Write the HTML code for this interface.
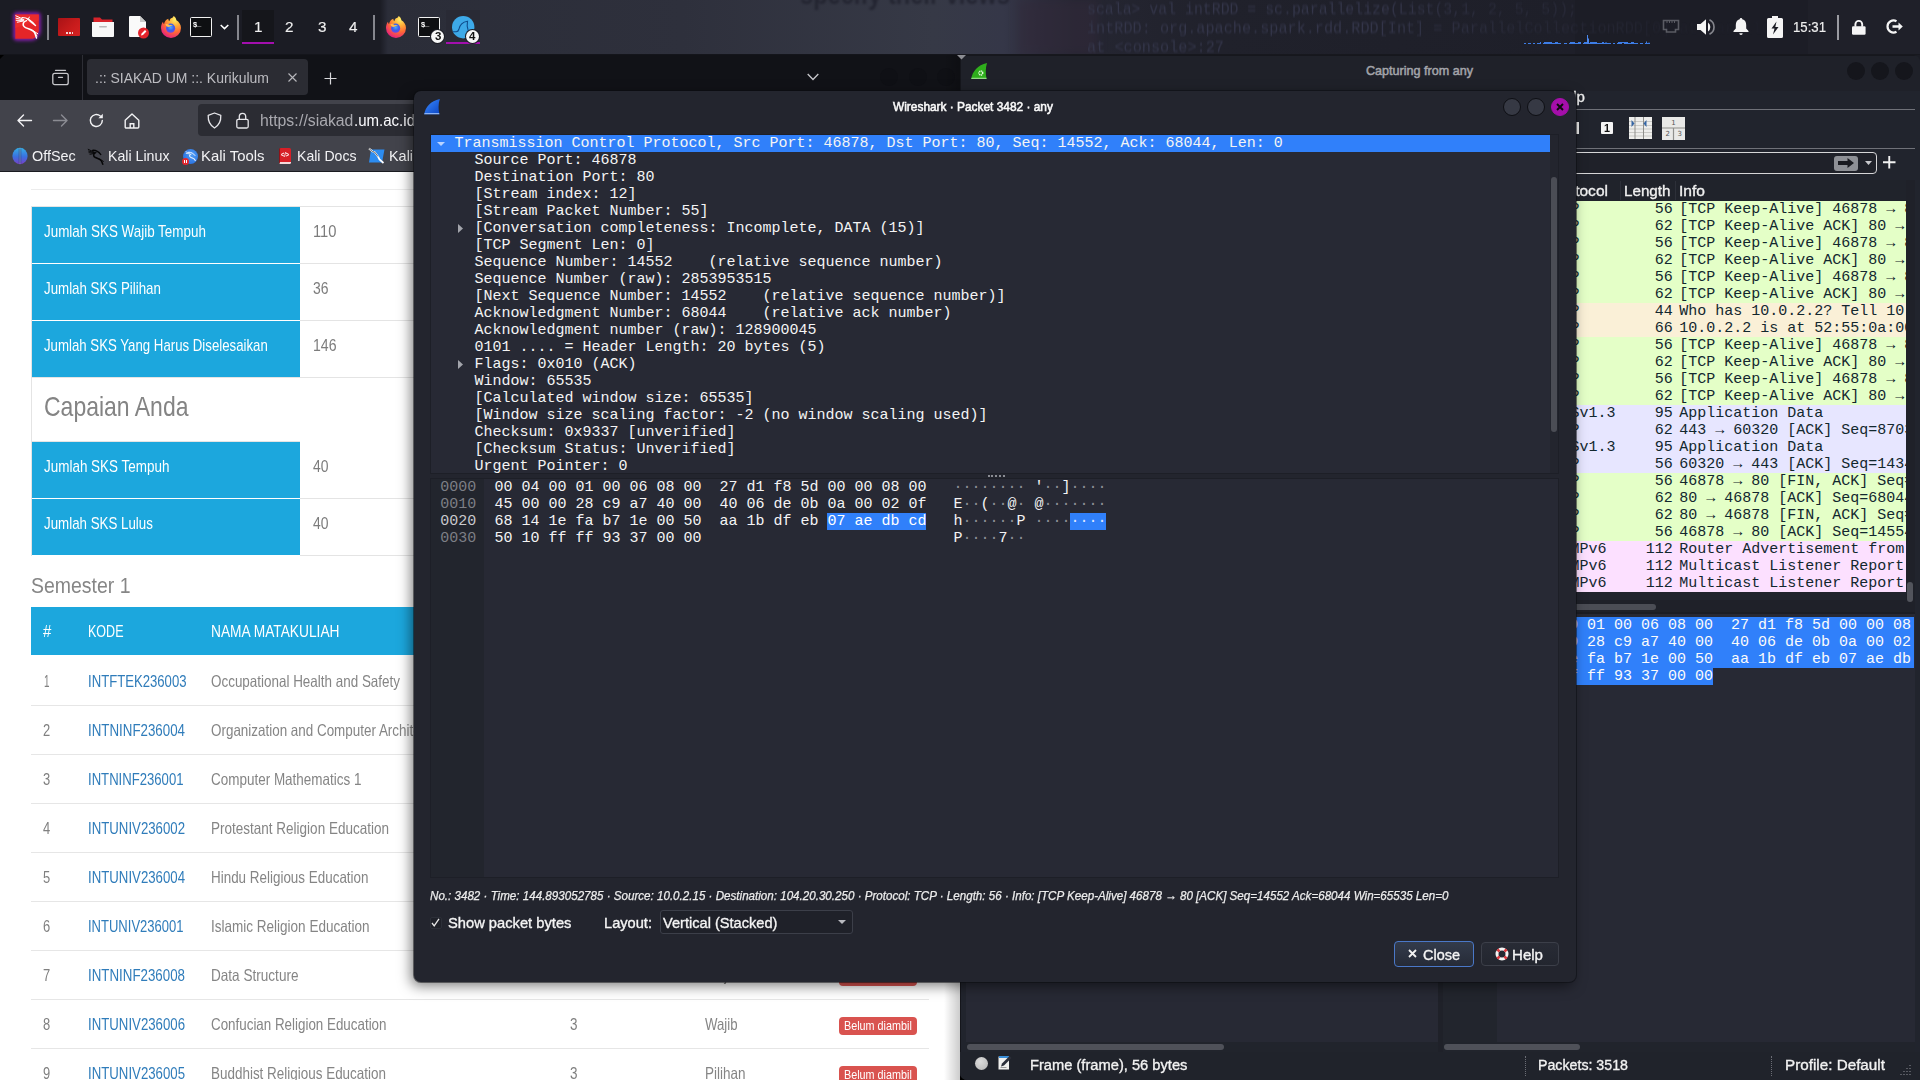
<!DOCTYPE html><html lang="en"><head><meta charset="utf-8"><title>Wireshark · Packet 3482 · any</title><style>
*{box-sizing:border-box;margin:0;padding:0}
html,body{width:1920px;height:1080px;overflow:hidden;background:#1b1c24}
#root{position:relative;width:1920px;height:1080px;overflow:hidden;background:#1b1c24;font-family:"Liberation Sans",sans-serif}
.b{position:absolute}
.t{position:absolute;white-space:pre;line-height:1;transform-origin:0 0;display:block}
.s{font-family:"Liberation Sans",sans-serif}
.m{font-family:"Liberation Mono",monospace}
.d{font-family:"DejaVu Sans",sans-serif}
.w{position:absolute;overflow:hidden}
svg{position:absolute;overflow:visible}
.ml{position:absolute;white-space:pre;font:15px/17px "Liberation Mono",monospace;height:17px}
</style></head><body><div id="root">
<div class="w" id="panel" style="left:0;top:0;width:1920px;height:55px;background:#1b1c24">
<div class="b" style="left:385px;top:0px;width:1190px;height:55px;background:linear-gradient(90deg,#2b2d38 0,#2e303c 25%,#363946 46%,#353748 52%,#2b2c3b 55%,#252632 58%,#20212b 70%,#1e1f29 100%);"></div>
<div class="b" style="left:380px;top:0px;width:8px;height:55px;background:linear-gradient(90deg,#1b1c24,#2b2d39);"></div>
<div class="b" style="left:1575px;top:0px;width:345px;height:55px;background:#1c1d26;"></div>
<div class="b" style="left:1808px;top:0px;width:112px;height:55px;background:#1f2029;"></div>
<div class="b" style="left:1018px;top:0;width:80px;height:55px;background:#33293a;opacity:.5;filter:blur(4px)"></div>
<span class="t s" style="left:800.00px;top:-21.40px;font-size:30px;color:#1d1e2a;font-weight:700;transform:scaleX(0.7871);filter:blur(1.2px);opacity:.7;">specify their views</span>
<span class="t m" style="left:1087.00px;top:0.98px;font-size:17px;color:#34364a;transform:scaleX(0.8733);filter:blur(.8px);-webkit-mask-image:linear-gradient(90deg,#000 0,#000 60%,rgba(0,0,0,.45) 85%);">scala&gt; val intRDD = sc.parallelize(List(3,1, 2, 5, 5));</span>
<span class="t m" style="left:1087.00px;top:19.98px;font-size:17px;color:#34364a;transform:scaleX(0.8934);filter:blur(.8px);-webkit-mask-image:linear-gradient(90deg,#000 0,#000 40%,rgba(0,0,0,.4) 60%,rgba(0,0,0,.3) 75%,rgba(0,0,0,.1) 82%,rgba(0,0,0,.05) 100%);">intRDD: org.apache.spark.rdd.RDD[Int] = ParallelCollectionRDD[0] at parallelize</span>
<span class="t m" style="left:1087.00px;top:38.98px;font-size:17px;color:#34364a;transform:scaleX(0.8953);filter:blur(.8px);">at &lt;console&gt;:27</span>
<div class="b" style="left:16px;top:15px;width:22px;height:23px;border-radius:2px 2px 9px 2px;background:#8a1fb0;box-shadow:0 0 3.500px 2.200px rgba(140,30,180,.85)"></div>
<svg style="left:15px;top:14px" width="24" height="25" viewBox="0 0 24 25"><path d="M.3.400h23.500v16.600C23 20.500 21 23.600 18 24.700H.3z" fill="#e52528"/><path d="M.3.400h23.500v6L.3 14z" fill="#ee2f2c" opacity=".7"/><g fill="none" stroke="#fff" stroke-linecap="round"><path d="M9 5.600L.8 1.800M8.500 6L1 4.200M8.300 6.400L1.200 6.300M8.500 7L2.300 8.200" stroke-width="1"/><path d="M7 3.500C12 3.300 16.500 6.500 20.600 11.600" stroke-width="1.200"/><path d="M12 4.800C15 6 18 8.500 20.600 11.600 17.500 10 15 8 12 4.800z" fill="#fff" stroke-width=".6"/><path d="M13.300 5.300l1-2.200M15.500 7l4 3.800" stroke-width="1"/><path d="M11.500 6.600C7.500 7.800 7 12 10.500 13.600 14.500 15.400 18.600 15.800 20 19.500L21.500 24" stroke-width="1.500"/><path d="M17 16l5.800 3.800M19 17.500l3 4.500" stroke-width="1"/></g></svg>
<div class="b" style="left:47px;top:15px;width:2px;height:25px;background:#85868d;"></div>
<div class="b" style="left:237px;top:15px;width:2px;height:25px;background:#85868d;"></div>
<div class="b" style="left:373px;top:15px;width:2px;height:25px;background:#85868d;"></div>
<div class="b" style="left:1837px;top:15px;width:2px;height:25px;background:#9a9ba1;"></div>
<div class="b" style="left:58px;top:18px;width:22px;height:18px;border-radius:1px;background:linear-gradient(135deg,#a91216,#c91c1c 60%,#d42222)"></div>
<div class="b" style="left:66px;top:32px;width:2px;height:2px;background:#f3d6d6;"></div><div class="b" style="left:69px;top:32px;width:2px;height:2px;background:#f3d6d6;"></div><div class="b" style="left:72px;top:32px;width:1px;height:2px;background:#f3d6d6;"></div>
<svg style="left:92px;top:16px" width="22" height="22" viewBox="0 0 22 22"><path d="M1.5 1.5h6.5l2 2h10.5v5h-19z" fill="#d8232a"/><path d="M0 6h22v14a1 1 0 0 1-1 1H1a1 1 0 0 1-1-1z" fill="#f7f7f7"/><rect x="7" y="10" width="8" height="1.6" rx=".8" fill="#b9b9b9"/></svg>
<svg style="left:129px;top:16px" width="20" height="23" viewBox="0 0 20 23"><path d="M0 1a1 1 0 0 1 1-1h10l6 6v14a1 1 0 0 1-1 1H1a1 1 0 0 1-1-1z" fill="#fafafa"/><path d="M11 0l6 6h-6z" fill="#c9c9c9"/><circle cx="14.5" cy="17" r="5.5" fill="#e3232b"/><path d="M12 19.5l.6-2 3.4-3.4 1.4 1.4-3.4 3.4z" fill="#fff"/></svg>
<svg style="left:160px;top:16px" width="22" height="22" viewBox="0 0 22 22"><defs><radialGradient id="ffa1" cx="70%" cy="15%" r="95%"><stop offset="0" stop-color="#fff36b"/><stop offset=".3" stop-color="#ffb13a"/><stop offset=".6" stop-color="#ff6b35"/><stop offset="1" stop-color="#e31587"/></radialGradient><radialGradient id="ffb1" cx="50%" cy="40%" r="60%"><stop offset="0" stop-color="#4aa8ff"/><stop offset=".6" stop-color="#3d5fe8"/><stop offset="1" stop-color="#7542e5"/></radialGradient></defs><path d="M11 2.2c1.4-.2 2.2-1.2 2.6-2.2 1.6 1 2.6 2.6 2.8 4.200C19 5.600 21 8.600 21 12A10 10 0 0 1 1 12c0-2.200.6-4.600 2-6.200 0 1 .4 1.800 1 2.400C4.400 6 6 3.400 8.400 2.800 8.200 3.600 8.600 4.600 9.400 5.200 9.600 3.800 10.200 2.800 11 2.200z" fill="url(#ffa1)"/><circle cx="10.6" cy="12.200" r="4.600" fill="url(#ffb1)"/><path d="M5.400 8.200c1.600-.4 3.200 0 4.400 1 1.200-.4 2.400-.2 3.400.4-1.800-.2-2.800.8-4 1.200-1.600.6-3.400-.8-3.800-2.600z" fill="#ffbd4f"/></svg>
<div class="b" style="left:190px;top:17px;width:22px;height:20px;background:#0e0f12;border:1.5px solid #f2f2f2;border-radius:1.5px"></div>
<span class="t s" style="left:192.60px;top:20.57px;font-size:7.6px;color:#fff;font-weight:700;will-change:transform;">$</span>
<span class="t s" style="left:196.80px;top:20.17px;font-size:7.6px;color:#fff;font-weight:700;will-change:transform;">_</span>
<svg style="left:220px;top:24px" width="9" height="6" viewBox="0 0 9 6"><path d="M.7 1l3.800 3.600L8.300 1" fill="none" stroke="#fff" stroke-width="1.500"/></svg>
<div class="b" style="left:242px;top:10px;width:32px;height:34px;background:#15161b;"></div>
<div class="b" style="left:242px;top:42px;width:32px;height:2px;background:#a30fae;"></div>
<span class="t s" style="left:253.50px;top:19.16px;font-size:15.4px;color:#f0f0f0;transform:scaleX(0.9924);-webkit-text-stroke:0.12px;">1</span>
<span class="t s" style="left:285.30px;top:19.16px;font-size:15.4px;color:#f0f0f0;transform:scaleX(0.9924);-webkit-text-stroke:0.12px;">2</span>
<span class="t s" style="left:317.50px;top:19.16px;font-size:15.4px;color:#f0f0f0;transform:scaleX(0.9924);-webkit-text-stroke:0.12px;">3</span>
<span class="t s" style="left:348.70px;top:19.16px;font-size:15.4px;color:#f0f0f0;transform:scaleX(0.9924);-webkit-text-stroke:0.12px;">4</span>
<svg style="left:385px;top:16px" width="22" height="22" viewBox="0 0 22 22"><defs><radialGradient id="ffa2" cx="70%" cy="15%" r="95%"><stop offset="0" stop-color="#fff36b"/><stop offset=".3" stop-color="#ffb13a"/><stop offset=".6" stop-color="#ff6b35"/><stop offset="1" stop-color="#e31587"/></radialGradient><radialGradient id="ffb2" cx="50%" cy="40%" r="60%"><stop offset="0" stop-color="#4aa8ff"/><stop offset=".6" stop-color="#3d5fe8"/><stop offset="1" stop-color="#7542e5"/></radialGradient></defs><path d="M11 2.2c1.4-.2 2.2-1.2 2.6-2.2 1.6 1 2.6 2.6 2.8 4.200C19 5.600 21 8.600 21 12A10 10 0 0 1 1 12c0-2.200.6-4.600 2-6.200 0 1 .4 1.800 1 2.400C4.400 6 6 3.400 8.400 2.800 8.200 3.600 8.600 4.600 9.400 5.200 9.600 3.800 10.200 2.800 11 2.200z" fill="url(#ffa2)"/><circle cx="10.6" cy="12.200" r="4.600" fill="url(#ffb2)"/><path d="M5.400 8.200c1.600-.4 3.200 0 4.400 1 1.200-.4 2.400-.2 3.400.4-1.800-.2-2.800.8-4 1.200-1.600.6-3.400-.8-3.800-2.600z" fill="#ffbd4f"/></svg>
<div class="b" style="left:418px;top:17px;width:22px;height:20px;background:#0e0f12;border:1.5px solid #f2f2f2;border-radius:1.5px"></div>
<span class="t s" style="left:420.60px;top:20.57px;font-size:7.6px;color:#fff;font-weight:700;will-change:transform;">$</span>
<span class="t s" style="left:424.80px;top:20.17px;font-size:7.6px;color:#fff;font-weight:700;will-change:transform;">_</span>
<div class="b" style="left:446px;top:10px;width:34px;height:34px;background:#292a35;"></div>
<div class="b" style="left:446px;top:42px;width:34px;height:2px;background:#a30fae;"></div>
<svg style="left:451.700px;top:15.800px" width="23" height="23" viewBox="0 0 23 23"><circle cx="11.200" cy="11.200" r="11.200" fill="#3da9e8"/><path d="M1 15.700h3.200c1.600 0 2.200-.5 2.600-2.200C7.600 9.500 10.500 6 15.500 5.300c-.7 3.200-.5 6.500.8 9.700" fill="none" stroke="#0f4c8c" stroke-width="1.100"/></svg>
<div class="b" style="left:431.3px;top:29.5px;width:13px;height:13px;border-radius:50%;background:#f7f7f7;box-shadow:0 0 0 1px #1b1c24"></div>
<span class="t s" style="left:434.60px;top:30.89px;font-size:11px;color:#111;font-weight:700;transform:scaleX(1.0461);">3</span>
<div class="b" style="left:465.5px;top:29.5px;width:13px;height:13px;border-radius:50%;background:#f7f7f7;box-shadow:0 0 0 1px #1b1c24"></div>
<span class="t s" style="left:468.80px;top:30.89px;font-size:11px;color:#111;font-weight:700;transform:scaleX(1.0461);">4</span>
<svg style="left:1522px;top:34px" width="130" height="11" viewBox="0 0 130 11"><path d="M2 9.500h2M6 9.500h3M11 9.500h2M15 9.500h4M21 9.500h18M42 9.500h3M47 9.500h12M61 9.500h28M91 9.500h2M95 9.500h5M102 9.500h14M118 9.500h3M123 9.500h5" stroke="#3d7de6" stroke-width="1" fill="none"/><path d="M18.500 8v2M22 8.500h8M33 8.500h3M48 8.500h5M56 8.500h3M62 8.500h4M68 8.500h7M80 8.500h2M84 8v2M96 8.500h10M109 8.500h3M124.500 7.500v2.500M127 8.500v1.500" stroke="#3d7de6" stroke-width="1" fill="none"/><path d="M65.500 1v9M66.500 4.500v5.500" stroke="#4a86ea" stroke-width="1" fill="none"/></svg>
<svg style="left:1662px;top:19px" width="18" height="15" viewBox="0 0 18 15"><path d="M1.500 1.500h15v9h-3v2.500h-9V10.500h-3z" fill="none" stroke="#5a5b63" stroke-width="1.600"/><path d="M5 2v2M7.500 2v2M10 2v2M12.500 2v2" stroke="#5a5b63" stroke-width="1"/></svg>
<svg style="left:1697px;top:18px" width="19" height="18" viewBox="0 0 19 18"><path d="M0 6h3.500L9 1.200v15.600L3.500 12H0z" fill="#f5f5f5"/><path d="M11 4.500a5.500 5.500 0 0 1 0 9z" fill="#f5f5f5"/><path d="M12.500 1.800a8 8 0 0 1 0 14.400" fill="none" stroke="#85868d" stroke-width="1.600"/></svg>
<svg style="left:1733px;top:18px" width="16" height="17" viewBox="0 0 16 17"><path d="M8 0a1.300 1.300 0 0 1 1.300 1.300C12 2 13.200 4.300 13.200 7v3.500L15.500 13v1H.5v-1l2.300-2.500V7c0-2.700 1.200-5 3.900-5.700A1.300 1.300 0 0 1 8 0z" fill="#f5f5f5"/><path d="M6.300 15.200h3.400a1.700 1.700 0 0 1-3.400 0z" fill="#f5f5f5"/></svg>
<svg style="left:1767px;top:16px" width="16" height="22" viewBox="0 0 16 22"><path d="M5 0h6v2h3.500a1.500 1.500 0 0 1 1.500 1.500v17a1.500 1.500 0 0 1-1.500 1.500h-13A1.500 1.500 0 0 1 0 20.500v-17A1.500 1.500 0 0 1 1.500 2H5z" fill="#f5f5f5"/><path d="M9.500 5.500L4.500 12.500h3l-1.500 6 5.500-7.500H8.300z" fill="#1b1c24"/></svg>
<span class="t s" style="left:1792.50px;top:19.05px;font-size:15.3px;color:#eeeeee;transform:scaleX(0.8619);-webkit-text-stroke:0.2px;">15:31</span>
<svg style="left:1852.300px;top:19.500px" width="13.600" height="15" viewBox="0 0 13.600 15"><rect x="0" y="6.300" width="13.600" height="8.500" rx="1.200" fill="#f5f5f5"/><path d="M3.400 6.800V4.300a3.400 3.400 0 0 1 6.800 0v2.500" fill="none" stroke="#f5f5f5" stroke-width="1.900"/></svg>
<svg style="left:1886px;top:19px" width="17" height="15" viewBox="0 0 17 15"><path d="M10.500 2.300A6 6 0 1 0 10.500 12.700" fill="none" stroke="#f5f5f5" stroke-width="2.200"/><path d="M6.500 6.200h6V3.500l4.300 4-4.300 4V8.800h-6z" fill="#f5f5f5"/></svg>
<div class="b" style="left:0px;top:54px;width:960px;height:1px;background:#14151b;"></div>
<div class="b" style="left:960px;top:54px;width:960px;height:1px;background:#17181e;"></div>
</div>
<div class="w" id="firefox" style="left:0;top:55px;width:960px;height:1025px;background:#fff">
<div class="b" style="left:0px;top:0px;width:961px;height:45px;background:#111217;"></div>
<svg style="left:0;top:0" width="5" height="5" viewBox="0 0 5 5"><path d="M0 0h4L0 4z" fill="#000"/></svg>
<div class="b" style="left:82px;top:0px;width:1px;height:45px;background:#2d2e35;"></div>
<svg style="left:52px;top:14px" width="17" height="17" viewBox="0 0 17 17"><rect x=".8" y="4.300" width="15.400" height="11.400" rx="2" fill="none" stroke="#c8c8cc" stroke-width="1.300"/><path d="M3.500 1.300h10" stroke="#c8c8cc" stroke-width="1.300" stroke-linecap="round"/><path d="M6.500 8.300h4" stroke="#c8c8cc" stroke-width="1.300" stroke-linecap="round"/></svg>
<div class="b" style="left:87px;top:4px;width:221px;height:36px;background:#2b2c33;border-radius:4px;"></div>
<span class="t s" style="left:95.30px;top:15.05px;font-size:15.3px;color:#bdbdc2;transform:scaleX(0.9136);">.:: SIAKAD UM ::. Kurikulum</span>
<svg style="left:288px;top:18px" width="9" height="9" viewBox="0 0 9 9"><path d="M.5.5l8 8M8.500.5l-8 8" stroke="#b8b8bd" stroke-width="1.100" fill="none"/></svg>
<svg style="left:324px;top:17px" width="13" height="13" viewBox="0 0 13 13"><path d="M6.500.5v12M.5 6.500h12" stroke="#d8d8dc" stroke-width="1.200" fill="none"/></svg>
<svg style="left:807px;top:18px" width="12" height="8" viewBox="0 0 12 8"><path d="M.7 1l5.300 5.500L11.300 1" stroke="#c8c8cc" stroke-width="1.300" fill="none"/></svg>
<div class="b" style="left:880px;top:13px;width:18px;height:18px;background:#0f1015;border-radius:50%;"></div>
<div class="b" style="left:909px;top:13px;width:18px;height:18px;background:#0f1015;border-radius:50%;"></div>
<div class="b" style="left:937px;top:13px;width:18px;height:18px;background:#0f1015;border-radius:50%;"></div>
<div class="b" style="left:0px;top:45px;width:961px;height:71px;background:#42434b;"></div>
<div class="b" style="left:0px;top:116px;width:961px;height:1px;background:#1a1b20;"></div>
<div class="b" style="left:198px;top:49px;width:600px;height:32px;background:#2b2c33;border-radius:4px;"></div>
<svg style="left:17px;top:59px" width="15" height="13" viewBox="0 0 15 13"><path d="M14.500 6.500H1.200M6.500 1L1 6.500 6.500 12" stroke="#f2f2f4" stroke-width="1.400" fill="none" stroke-linecap="round" stroke-linejoin="round"/></svg>
<svg style="left:53px;top:59px" width="15" height="13" viewBox="0 0 15 13"><path d="M.5 6.500h13.300M8.500 1L14 6.500 8.500 12" stroke="#8b8c93" stroke-width="1.400" fill="none" stroke-linecap="round" stroke-linejoin="round"/></svg>
<svg style="left:89px;top:58px" width="15" height="15" viewBox="0 0 15 15"><path d="M13.300 7.500A6 6 0 1 1 11.300 3" stroke="#f2f2f4" stroke-width="1.400" fill="none" stroke-linecap="round"/><path d="M13.800 .8v4.400H9.400z" fill="#f2f2f4"/></svg>
<svg style="left:124px;top:58px" width="16" height="16" viewBox="0 0 16 16"><path d="M1.200 7.300L8 1l6.800 6.300V14a1 1 0 0 1-1 1H2.200a1 1 0 0 1-1-1z" stroke="#f2f2f4" stroke-width="1.400" fill="none" stroke-linejoin="round"/><path d="M6.200 15v-4.300h3.600V15" stroke="#f2f2f4" stroke-width="1.400" fill="none"/></svg>
<svg style="left:207px;top:57px" width="15" height="17" viewBox="0 0 15 17"><path d="M7.500 1L13.800 3.300c.3 6-2 10.200-6.300 12.700C3.200 13.500.9 9.300 1.200 3.300z" stroke="#e6e6ea" stroke-width="1.300" fill="none" stroke-linejoin="round"/></svg>
<svg style="left:236px;top:57px" width="13" height="17" viewBox="0 0 13 17"><rect x=".8" y="7.300" width="11.400" height="8.700" rx="1.500" stroke="#e6e6ea" stroke-width="1.300" fill="none"/><path d="M3.300 7.300V4.500a3.200 3.200 0 0 1 6.400 0v2.800" stroke="#e6e6ea" stroke-width="1.300" fill="none"/></svg>
<span class="t s" style="left:260.30px;top:57.75px;font-size:16px;color:#a9a9af;transform:scaleX(0.9864);">https:</span>
<span class="t s" style="left:298.90px;top:57.75px;font-size:16px;color:#a9a9af;transform:scaleX(0.9866);">//siakad</span>
<span class="t s" style="left:353.50px;top:57.75px;font-size:16px;color:#fbfbfe;transform:scaleX(0.9397);">.um.ac.id</span>
<svg style="left:12px;top:92px" width="16" height="18" viewBox="0 0 16 18"><defs><linearGradient id="ofs" x1="0" y1="0" x2="0" y2="1"><stop offset="0" stop-color="#35b0e6"/><stop offset=".55" stop-color="#3a6fe0"/><stop offset="1" stop-color="#7a3fc8"/></linearGradient></defs><ellipse cx="8" cy="9" rx="7.600" ry="8.300" fill="url(#ofs)"/><path d="M7.200 1.500v15M8.800 1.500v15" stroke="#2b3350" stroke-width=".7" opacity=".75"/><path d="M8 1v16" stroke="#9ab8ea" stroke-width=".6" opacity=".7"/></svg>
<span class="t s" style="left:32.30px;top:93.84px;font-size:14.6px;color:#f2f2f4;transform:scaleX(0.9850);">OffSec</span>
<svg style="left:87px;top:92px" width="18" height="18" viewBox="0 0 18 18"><g fill="none" stroke="#050506" stroke-linecap="round"><path d="M7.500 5.300L1.200 2.300M7.200 5.600L1.500 4M7 6L2 5.700M7.200 6.500L3 7.300" stroke-width=".9"/><path d="M5.500 3.300C8.500 3 11.500 4.500 13.800 7.600" stroke-width="1.300"/><path d="M8.800 5.600C6 6.600 6 9.500 8.300 10.500 11 11.700 13.500 12 14.600 14.300L15.800 17.300" stroke-width="1.500"/><path d="M12.800 12l3.600 2.400" stroke-width=".9"/></g></svg>
<span class="t s" style="left:108.30px;top:93.84px;font-size:14.6px;color:#f2f2f4;transform:scaleX(0.9715);">Kali Linux</span>
<div class="b" style="left:183px;top:93.500px;width:15px;height:15px;border-radius:50%;background:radial-gradient(circle at 60% 40%,#4f9cf5,#2a72e0 75%)"></div>
<svg style="left:183px;top:93.500px" width="15" height="15" viewBox="0 0 15 15"><g fill="none" stroke="#e8f2ff" stroke-linecap="round"><path d="M6.500 4.200L3 2.800M6.300 4.800L3.200 4.400" stroke-width=".8"/><path d="M5.500 3.200C8 3 10.500 4.300 12 6.500" stroke-width="1"/><path d="M8 5C6 5.800 6.200 7.800 8 8.500 10 9.300 11.500 9.600 12.300 11.500" stroke-width="1.100"/></g></svg>
<div class="b" style="left:182px;top:102.800px;width:7px;height:7px;border-radius:50%;background:#e3262d"></div>
<div class="b" style="left:184.2px;top:104.80000000000001px;width:1px;height:3px;background:#fff;"></div><div class="b" style="left:186px;top:104.80000000000001px;width:1px;height:3px;background:#fff;"></div>
<span class="t s" style="left:201.00px;top:93.84px;font-size:14.6px;color:#f2f2f4;transform:scaleX(1.0205);">Kali Tools</span>
<div class="b" style="left:279px;top:93px;width:12px;height:16px;border-radius:1.500px;background:#d71f27;border-bottom:2px solid #f3d9da;border-left:1px solid #8e1218"></div>
<span class="t s" style="left:281.30px;top:96.80px;font-size:6.5px;color:#fff;font-weight:700;transform:scaleX(0.8513);">&lt;/&gt;</span>
<span class="t s" style="left:297.30px;top:93.84px;font-size:14.6px;color:#f2f2f4;transform:scaleX(0.9649);">Kali Docs</span>
<svg style="left:368px;top:93px" width="18" height="16" viewBox="0 0 18 16"><path d="M3 1.500h13.500l-2.500 13H1z" fill="#2c8cf0"/><path d="M1 .5l3.500 3 2 .5 3.500 4.500 1.500 3 4 3.500" stroke="#fff" stroke-width="1.700" fill="none"/><path d="M1 .5l3.500 3 2 .5 3.500 4.500" stroke="#111" stroke-width=".6" fill="none"/></svg>
<span class="t s" style="left:389.30px;top:93.84px;font-size:14.6px;color:#f2f2f4;transform:scaleX(0.9886);">Kali Forums</span>
<div class="b" style="left:0px;top:117px;width:961px;height:910px;background:#ffffff;"></div>
<div class="b" style="left:31px;top:134px;width:898px;height:1px;background:#ececec;"></div>
<div class="b" style="left:31px;top:151px;width:898px;height:1px;background:#e4e4e4;"></div>
<div class="b" style="left:31px;top:151px;width:1px;height:350px;background:#e4e4e4;"></div>
<div class="b" style="left:32px;top:152px;width:268px;height:56px;background:#1ca7dd;"></div>
<div class="b" style="left:300px;top:208px;width:629px;height:1px;background:#e4e4e4;"></div>
<span class="t s" style="left:44.30px;top:167.98px;font-size:16.2px;color:#ffffff;transform:scaleX(0.8291);">Jumlah SKS Wajib Tempuh</span>
<span class="t s" style="left:313.30px;top:167.98px;font-size:16.2px;color:#7c7c7c;transform:scaleX(0.9099);">110</span>
<div class="b" style="left:32px;top:209px;width:268px;height:56px;background:#1ca7dd;"></div>
<div class="b" style="left:300px;top:265px;width:629px;height:1px;background:#e4e4e4;"></div>
<span class="t s" style="left:44.30px;top:224.98px;font-size:16.2px;color:#ffffff;transform:scaleX(0.8223);">Jumlah SKS Pilihan</span>
<span class="t s" style="left:313.30px;top:224.98px;font-size:16.2px;color:#7c7c7c;transform:scaleX(0.8602);">36</span>
<div class="b" style="left:32px;top:266px;width:268px;height:56px;background:#1ca7dd;"></div>
<div class="b" style="left:300px;top:322px;width:629px;height:1px;background:#e4e4e4;"></div>
<span class="t s" style="left:44.30px;top:281.98px;font-size:16.2px;color:#ffffff;transform:scaleX(0.8174);">Jumlah SKS Yang Harus Diselesaikan</span>
<span class="t s" style="left:313.30px;top:281.98px;font-size:16.2px;color:#7c7c7c;transform:scaleX(0.8694);">146</span>
<div class="b" style="left:32px;top:387px;width:268px;height:56px;background:#1ca7dd;"></div>
<div class="b" style="left:300px;top:443px;width:629px;height:1px;background:#e4e4e4;"></div>
<span class="t s" style="left:44.30px;top:402.98px;font-size:16.2px;color:#ffffff;transform:scaleX(0.8312);">Jumlah SKS Tempuh</span>
<span class="t s" style="left:313.30px;top:402.98px;font-size:16.2px;color:#7c7c7c;transform:scaleX(0.8602);">40</span>
<div class="b" style="left:32px;top:444px;width:268px;height:56px;background:#1ca7dd;"></div>
<div class="b" style="left:300px;top:500px;width:629px;height:1px;background:#e4e4e4;"></div>
<span class="t s" style="left:44.30px;top:459.98px;font-size:16.2px;color:#ffffff;transform:scaleX(0.8234);">Jumlah SKS Lulus</span>
<span class="t s" style="left:313.30px;top:459.98px;font-size:16.2px;color:#7c7c7c;transform:scaleX(0.8602);">40</span>
<div class="b" style="left:32px;top:322px;width:897px;height:1px;background:#e4e4e4;"></div>
<div class="b" style="left:32px;top:386px;width:268px;height:1px;background:#e4e4e4;"></div>
<span class="t s" style="left:44.00px;top:337.73px;font-size:27.6px;color:#848484;transform:scaleX(0.8332);">Capaian Anda</span>
<span class="t s" style="left:31.30px;top:520.26px;font-size:22.6px;color:#868686;transform:scaleX(0.8610);">Semester 1</span>
<div class="b" style="left:31px;top:552px;width:898px;height:48px;background:#1ca7dd;"></div>
<span class="t s" style="left:43.30px;top:568.03px;font-size:16.5px;color:#fff;transform:scaleX(0.9045);">#</span>
<span class="t s" style="left:88.00px;top:568.03px;font-size:16.5px;color:#fff;transform:scaleX(0.7592);">KODE</span>
<span class="t s" style="left:211.00px;top:568.03px;font-size:16.5px;color:#fff;transform:scaleX(0.8326);">NAMA MATAKULIAH</span>
<span class="t s" style="left:571.00px;top:568.03px;font-size:16.5px;color:#fff;transform:scaleX(0.7269);">SKS</span>
<span class="t s" style="left:705.00px;top:568.03px;font-size:16.5px;color:#fff;transform:scaleX(0.8433);">WAJIB/PILIHAN</span>
<span class="t s" style="left:839.00px;top:568.03px;font-size:16.5px;color:#fff;transform:scaleX(0.8301);">STATUS</span>
<div class="b" style="left:31px;top:650px;width:898px;height:1px;background:#e6e6e6;"></div>
<span class="t s" style="left:43.50px;top:618.03px;font-size:16.5px;color:#808080;transform:scaleX(0.5993);">1</span>
<span class="t s" style="left:88.00px;top:618.03px;font-size:16.5px;color:#2f7cba;transform:scaleX(0.7956);">INTFTEK236003</span>
<span class="t s" style="left:211.00px;top:618.03px;font-size:16.5px;color:#858585;transform:scaleX(0.8144);">Occupational Health and Safety</span>
<span class="t s" style="left:570.30px;top:618.03px;font-size:16.5px;color:#808080;transform:scaleX(0.8173);">2</span>
<span class="t s" style="left:705.00px;top:618.03px;font-size:16.5px;color:#858585;transform:scaleX(0.7996);">Wajib</span>
<div class="b" style="left:839px;top:619px;width:78px;height:18px;background:#d9534f;border-radius:4px;"></div>
<span class="t s" style="left:844.30px;top:620.89px;font-size:13px;color:#fff;transform:scaleX(0.8304);">Belum diambil</span>
<div class="b" style="left:31px;top:699px;width:898px;height:1px;background:#e6e6e6;"></div>
<span class="t s" style="left:42.80px;top:667.03px;font-size:16.5px;color:#808080;transform:scaleX(0.7846);">2</span>
<span class="t s" style="left:88.00px;top:667.03px;font-size:16.5px;color:#2f7cba;transform:scaleX(0.8074);">INTNINF236004</span>
<span class="t s" style="left:211.00px;top:667.03px;font-size:16.5px;color:#858585;transform:scaleX(0.8135);">Organization and Computer Architecture</span>
<span class="t s" style="left:570.30px;top:667.03px;font-size:16.5px;color:#808080;transform:scaleX(0.8173);">3</span>
<span class="t s" style="left:705.00px;top:667.03px;font-size:16.5px;color:#858585;transform:scaleX(0.7996);">Wajib</span>
<div class="b" style="left:839px;top:668px;width:78px;height:18px;background:#d9534f;border-radius:4px;"></div>
<span class="t s" style="left:844.30px;top:669.89px;font-size:13px;color:#fff;transform:scaleX(0.8304);">Belum diambil</span>
<div class="b" style="left:31px;top:748px;width:898px;height:1px;background:#e6e6e6;"></div>
<span class="t s" style="left:42.80px;top:716.03px;font-size:16.5px;color:#808080;transform:scaleX(0.7846);">3</span>
<span class="t s" style="left:88.00px;top:716.03px;font-size:16.5px;color:#2f7cba;transform:scaleX(0.7949);">INTNINF236001</span>
<span class="t s" style="left:211.00px;top:716.03px;font-size:16.5px;color:#858585;transform:scaleX(0.8165);">Computer Mathematics 1</span>
<span class="t s" style="left:570.30px;top:716.03px;font-size:16.5px;color:#808080;transform:scaleX(0.8173);">3</span>
<span class="t s" style="left:705.00px;top:716.03px;font-size:16.5px;color:#858585;transform:scaleX(0.7996);">Wajib</span>
<div class="b" style="left:839px;top:717px;width:78px;height:18px;background:#d9534f;border-radius:4px;"></div>
<span class="t s" style="left:844.30px;top:718.89px;font-size:13px;color:#fff;transform:scaleX(0.8304);">Belum diambil</span>
<div class="b" style="left:31px;top:797px;width:898px;height:1px;background:#e6e6e6;"></div>
<span class="t s" style="left:42.80px;top:765.03px;font-size:16.5px;color:#808080;transform:scaleX(0.7846);">4</span>
<span class="t s" style="left:88.00px;top:765.03px;font-size:16.5px;color:#2f7cba;transform:scaleX(0.8012);">INTUNIV236002</span>
<span class="t s" style="left:211.00px;top:765.03px;font-size:16.5px;color:#858585;transform:scaleX(0.8188);">Protestant Religion Education</span>
<span class="t s" style="left:570.30px;top:765.03px;font-size:16.5px;color:#808080;transform:scaleX(0.8173);">3</span>
<span class="t s" style="left:705.00px;top:765.03px;font-size:16.5px;color:#858585;transform:scaleX(0.8176);">Pilihan</span>
<div class="b" style="left:839px;top:766px;width:78px;height:18px;background:#d9534f;border-radius:4px;"></div>
<span class="t s" style="left:844.30px;top:767.89px;font-size:13px;color:#fff;transform:scaleX(0.8304);">Belum diambil</span>
<div class="b" style="left:31px;top:846px;width:898px;height:1px;background:#e6e6e6;"></div>
<span class="t s" style="left:42.80px;top:814.03px;font-size:16.5px;color:#808080;transform:scaleX(0.7846);">5</span>
<span class="t s" style="left:88.00px;top:814.03px;font-size:16.5px;color:#2f7cba;transform:scaleX(0.8012);">INTUNIV236004</span>
<span class="t s" style="left:211.00px;top:814.03px;font-size:16.5px;color:#858585;transform:scaleX(0.8138);">Hindu Religious Education</span>
<span class="t s" style="left:570.30px;top:814.03px;font-size:16.5px;color:#808080;transform:scaleX(0.8173);">3</span>
<span class="t s" style="left:705.00px;top:814.03px;font-size:16.5px;color:#858585;transform:scaleX(0.8176);">Pilihan</span>
<div class="b" style="left:839px;top:815px;width:78px;height:18px;background:#d9534f;border-radius:4px;"></div>
<span class="t s" style="left:844.30px;top:816.89px;font-size:13px;color:#fff;transform:scaleX(0.8304);">Belum diambil</span>
<div class="b" style="left:31px;top:895px;width:898px;height:1px;background:#e6e6e6;"></div>
<span class="t s" style="left:42.80px;top:863.03px;font-size:16.5px;color:#808080;transform:scaleX(0.7846);">6</span>
<span class="t s" style="left:88.00px;top:863.03px;font-size:16.5px;color:#2f7cba;transform:scaleX(0.7889);">INTUNIV236001</span>
<span class="t s" style="left:211.00px;top:863.03px;font-size:16.5px;color:#858585;transform:scaleX(0.8190);">Islamic Religion Education</span>
<span class="t s" style="left:570.30px;top:863.03px;font-size:16.5px;color:#808080;transform:scaleX(0.8173);">3</span>
<span class="t s" style="left:705.00px;top:863.03px;font-size:16.5px;color:#858585;transform:scaleX(0.8176);">Pilihan</span>
<div class="b" style="left:839px;top:864px;width:78px;height:18px;background:#d9534f;border-radius:4px;"></div>
<span class="t s" style="left:844.30px;top:865.89px;font-size:13px;color:#fff;transform:scaleX(0.8304);">Belum diambil</span>
<div class="b" style="left:31px;top:944px;width:898px;height:1px;background:#e6e6e6;"></div>
<span class="t s" style="left:42.80px;top:912.03px;font-size:16.5px;color:#808080;transform:scaleX(0.7846);">7</span>
<span class="t s" style="left:88.00px;top:912.03px;font-size:16.5px;color:#2f7cba;transform:scaleX(0.8074);">INTNINF236008</span>
<span class="t s" style="left:211.00px;top:912.03px;font-size:16.5px;color:#858585;transform:scaleX(0.8225);">Data Structure</span>
<span class="t s" style="left:570.30px;top:912.03px;font-size:16.5px;color:#808080;transform:scaleX(0.8173);">3</span>
<span class="t s" style="left:705.00px;top:912.03px;font-size:16.5px;color:#858585;transform:scaleX(0.7996);">Wajib</span>
<div class="b" style="left:839px;top:913px;width:78px;height:18px;background:#d9534f;border-radius:4px;"></div>
<span class="t s" style="left:844.30px;top:914.89px;font-size:13px;color:#fff;transform:scaleX(0.8304);">Belum diambil</span>
<div class="b" style="left:31px;top:993px;width:898px;height:1px;background:#e6e6e6;"></div>
<span class="t s" style="left:42.80px;top:961.03px;font-size:16.5px;color:#808080;transform:scaleX(0.7846);">8</span>
<span class="t s" style="left:88.00px;top:961.03px;font-size:16.5px;color:#2f7cba;transform:scaleX(0.8012);">INTUNIV236006</span>
<span class="t s" style="left:211.00px;top:961.03px;font-size:16.5px;color:#858585;transform:scaleX(0.8107);">Confucian Religion Education</span>
<span class="t s" style="left:570.30px;top:961.03px;font-size:16.5px;color:#808080;transform:scaleX(0.8173);">3</span>
<span class="t s" style="left:705.00px;top:961.03px;font-size:16.5px;color:#858585;transform:scaleX(0.7996);">Wajib</span>
<div class="b" style="left:839px;top:962px;width:78px;height:18px;background:#d9534f;border-radius:4px;"></div>
<span class="t s" style="left:844.30px;top:963.89px;font-size:13px;color:#fff;transform:scaleX(0.8304);">Belum diambil</span>
<div class="b" style="left:31px;top:1042px;width:898px;height:1px;background:#e6e6e6;"></div>
<span class="t s" style="left:42.80px;top:1010.03px;font-size:16.5px;color:#808080;transform:scaleX(0.7846);">9</span>
<span class="t s" style="left:88.00px;top:1010.03px;font-size:16.5px;color:#2f7cba;transform:scaleX(0.8012);">INTUNIV236005</span>
<span class="t s" style="left:211.00px;top:1010.03px;font-size:16.5px;color:#858585;transform:scaleX(0.8153);">Buddhist Religious Education</span>
<span class="t s" style="left:570.30px;top:1010.03px;font-size:16.5px;color:#808080;transform:scaleX(0.8173);">3</span>
<span class="t s" style="left:705.00px;top:1010.03px;font-size:16.5px;color:#858585;transform:scaleX(0.8176);">Pilihan</span>
<div class="b" style="left:839px;top:1011px;width:78px;height:18px;background:#d9534f;border-radius:4px;"></div>
<span class="t s" style="left:844.30px;top:1012.89px;font-size:13px;color:#fff;transform:scaleX(0.8304);">Belum diambil</span>
</div>
<div class="b" style="left:944px;top:55px;width:16px;height:1025px;background:linear-gradient(90deg,rgba(0,0,0,0),rgba(0,0,0,.2))"></div>
<div class="b" style="left:960px;top:1072px;width:8px;height:8px;background:#000;"></div>
<div class="w" id="wsmain" style="left:960px;top:55px;width:960px;height:1025px;background:#21242d;border-radius:0 7px 0 7px">
<div class="b" style="left:0px;top:0px;width:960px;height:36px;background:#1f2129;"></div>
<div class="b" style="left:0px;top:0px;width:960px;height:1px;background:#16171d;"></div>
<svg style="left:11px;top:8px" width="17" height="17" viewBox="0 0 17 17"><path d="M.2 16C1.500 8.500 6.500 2 16 0c-1.600 5.200-1.500 10.800-.4 16z" fill="#2fae1c"/><path d="M.2 16h15.400l-.3-1.300H.6z" fill="#8fdc80"/><circle cx="9.800" cy="10" r="1.900" fill="none" stroke="#e4f7df" stroke-width="1.500" stroke-dasharray="1.100 .5"/></svg>
<span class="t s" style="left:406.00px;top:9.63px;font-size:12.6px;color:#a3a4aa;-webkit-text-stroke:0.5px;">Capturing from any</span>
<div class="b" style="left:887px;top:7px;width:18px;height:18px;border-radius:50%;background:#15161c"></div>
<div class="b" style="left:911px;top:7px;width:18px;height:18px;border-radius:50%;background:#15161c"></div>
<div class="b" style="left:935px;top:7px;width:18px;height:18px;border-radius:50%;background:#15161c"></div>
<div class="b" style="left:0px;top:0px;width:1px;height:1025px;background:#15161c;"></div>
<span class="t s" style="left:594.00px;top:34.64px;font-size:14.6px;color:#f0f0f0;transform:scaleX(1.0324);-webkit-text-stroke:0.3px;">Help</span>
<div class="b" style="left:616px;top:54px;width:339px;height:1px;background:#6f7178;"></div>
<div class="b" style="left:612px;top:67px;width:7px;height:12px;background:#e8e8e8;"></div>
<div class="b" style="left:641px;top:67px;width:12.3px;height:12px;background:#f4f4f4;border-radius:1px;"></div>
<span class="t s" style="left:644.20px;top:67.89px;font-size:11px;color:#111;font-weight:700;transform:scaleX(0.9807);">1</span>
<svg style="left:669px;top:62px" width="23" height="22" viewBox="0 0 23 22"><rect width="23" height="22" fill="#eeeeec"/><path d="M0 4.500h23M0 8.500h23M0 12h23M0 15.500h23M0 19h23" stroke="#c9c9c6" stroke-width="1.200"/><path d="M6 0v22M14.500 0v22" stroke="#8f8f8c" stroke-width="1"/><path d="M2.500 3l3 3.500-3 3.500zM17.500 3l-3 3.500 3 3.500z" fill="#3465a4"/></svg>
<svg style="left:702px;top:62px" width="23" height="23" viewBox="0 0 23 23"><rect width="23" height="23" fill="#e9e9e7"/><path d="M0 11h23M11.500 11v12" stroke="#8f8f8c" stroke-width="1.200"/></svg>
<span class="t d" style="left:711.30px;top:64.58px;font-size:7px;color:#555;">1</span>
<span class="t d" style="left:705.50px;top:76.08px;font-size:7px;color:#555;">2</span>
<span class="t d" style="left:717.50px;top:76.08px;font-size:7px;color:#555;">3</span>
<div class="b" style="left:616px;top:93px;width:339px;height:1px;background:#6f7178;"></div>
<div class="b" style="left:440px;top:97px;width:477px;height:22px;background:#1f2129;border:1px solid #d6d6d8;border-radius:4px;"></div>
<div class="b" style="left:874px;top:101px;width:24px;height:15px;background:#8e9096;border-radius:3px;"></div>
<svg style="left:878px;top:103px" width="16" height="10" viewBox="0 0 16 10"><path d="M0 3h9.500V0L16 5 9.500 10V7H0z" fill="#1a1b21"/></svg>
<svg style="left:905px;top:106px" width="7" height="4" viewBox="0 0 7 4"><path d="M0 0h7L3.500 4z" fill="#c9c9cd"/></svg>
<svg style="left:923px;top:101px" width="12.500" height="12.500" viewBox="0 0 12.500 12.500"><path d="M6.250 0v12.500M0 6.250h12.500" stroke="#f2f2f2" stroke-width="1.900"/></svg>
<div class="b" style="left:600px;top:125px;width:346px;height:21px;background:#20232b;"></div>
<div class="b" style="left:660px;top:126px;width:1px;height:19px;background:#2d3039;"></div>
<div class="b" style="left:715px;top:126px;width:1px;height:19px;background:#2d3039;"></div>
<span class="t s" style="left:591.00px;top:127.66px;font-size:15.4px;color:#f0f0f0;transform:scaleX(1.0089);-webkit-text-stroke:0.35px;">Protocol</span>
<span class="t s" style="left:664.30px;top:127.66px;font-size:15.4px;color:#f0f0f0;transform:scaleX(0.9872);-webkit-text-stroke:0.35px;">Length</span>
<span class="t s" style="left:718.50px;top:127.66px;font-size:15.4px;color:#f0f0f0;transform:scaleX(1.0122);-webkit-text-stroke:0.35px;">Info</span>
<div class="w" style="left:580px;top:146px;width:366px;height:391px;color:#12272e">
<div class="ml" style="left:0;top:0px;width:366px;background:#e4ffc7"></div>
<span class="ml" style="left:12.6px;top:0px">TCP</span>
<span class="ml" style="left:114.7px;top:0px">56</span>
<span class="ml" style="left:139.3px;top:0px">[TCP Keep-Alive] 46878 → 80 [ACK] Seq=14552 Ack=68044 Win=65535 Len=0</span>
<div class="ml" style="left:0;top:17px;width:366px;background:#e4ffc7"></div>
<span class="ml" style="left:12.6px;top:17px">TCP</span>
<span class="ml" style="left:114.7px;top:17px">62</span>
<span class="ml" style="left:139.3px;top:17px">[TCP Keep-Alive ACK] 80 → 46878 [ACK] Seq=68044 Ack=14553 Win=65535 Len=0</span>
<div class="ml" style="left:0;top:34px;width:366px;background:#e4ffc7"></div>
<span class="ml" style="left:12.6px;top:34px">TCP</span>
<span class="ml" style="left:114.7px;top:34px">56</span>
<span class="ml" style="left:139.3px;top:34px">[TCP Keep-Alive] 46878 → 80 [ACK] Seq=14552 Ack=68044 Win=65535 Len=0</span>
<div class="ml" style="left:0;top:51px;width:366px;background:#e4ffc7"></div>
<span class="ml" style="left:12.6px;top:51px">TCP</span>
<span class="ml" style="left:114.7px;top:51px">62</span>
<span class="ml" style="left:139.3px;top:51px">[TCP Keep-Alive ACK] 80 → 46878 [ACK] Seq=68044 Ack=14553 Win=65535 Len=0</span>
<div class="ml" style="left:0;top:68px;width:366px;background:#e4ffc7"></div>
<span class="ml" style="left:12.6px;top:68px">TCP</span>
<span class="ml" style="left:114.7px;top:68px">56</span>
<span class="ml" style="left:139.3px;top:68px">[TCP Keep-Alive] 46878 → 80 [ACK] Seq=14552 Ack=68044 Win=65535 Len=0</span>
<div class="ml" style="left:0;top:85px;width:366px;background:#e4ffc7"></div>
<span class="ml" style="left:12.6px;top:85px">TCP</span>
<span class="ml" style="left:114.7px;top:85px">62</span>
<span class="ml" style="left:139.3px;top:85px">[TCP Keep-Alive ACK] 80 → 46878 [ACK] Seq=68044 Ack=14553 Win=65535 Len=0</span>
<div class="ml" style="left:0;top:102px;width:366px;background:#faf0d7"></div>
<span class="ml" style="left:12.6px;top:102px">ARP</span>
<span class="ml" style="left:114.7px;top:102px">44</span>
<span class="ml" style="left:139.3px;top:102px">Who has 10.0.2.2? Tell 10.0.2.15</span>
<div class="ml" style="left:0;top:119px;width:366px;background:#faf0d7"></div>
<span class="ml" style="left:12.6px;top:119px">ARP</span>
<span class="ml" style="left:114.7px;top:119px">66</span>
<span class="ml" style="left:139.3px;top:119px">10.0.2.2 is at 52:55:0a:00:02:02</span>
<div class="ml" style="left:0;top:136px;width:366px;background:#e4ffc7"></div>
<span class="ml" style="left:12.6px;top:136px">TCP</span>
<span class="ml" style="left:114.7px;top:136px">56</span>
<span class="ml" style="left:139.3px;top:136px">[TCP Keep-Alive] 46878 → 80 [ACK] Seq=14552 Ack=68044 Win=65535 Len=0</span>
<div class="ml" style="left:0;top:153px;width:366px;background:#e4ffc7"></div>
<span class="ml" style="left:12.6px;top:153px">TCP</span>
<span class="ml" style="left:114.7px;top:153px">62</span>
<span class="ml" style="left:139.3px;top:153px">[TCP Keep-Alive ACK] 80 → 46878 [ACK] Seq=68044 Ack=14553 Win=65535 Len=0</span>
<div class="ml" style="left:0;top:170px;width:366px;background:#e4ffc7"></div>
<span class="ml" style="left:12.6px;top:170px">TCP</span>
<span class="ml" style="left:114.7px;top:170px">56</span>
<span class="ml" style="left:139.3px;top:170px">[TCP Keep-Alive] 46878 → 80 [ACK] Seq=14552 Ack=68044 Win=65535 Len=0</span>
<div class="ml" style="left:0;top:187px;width:366px;background:#e4ffc7"></div>
<span class="ml" style="left:12.6px;top:187px">TCP</span>
<span class="ml" style="left:114.7px;top:187px">62</span>
<span class="ml" style="left:139.3px;top:187px">[TCP Keep-Alive ACK] 80 → 46878 [ACK] Seq=68044 Ack=14553 Win=65535 Len=0</span>
<div class="ml" style="left:0;top:204px;width:366px;background:#e7e6ff"></div>
<span class="ml" style="left:12.6px;top:204px">TLSv1.3</span>
<span class="ml" style="left:114.7px;top:204px">95</span>
<span class="ml" style="left:139.3px;top:204px">Application Data</span>
<div class="ml" style="left:0;top:221px;width:366px;background:#e7e6ff"></div>
<span class="ml" style="left:12.6px;top:221px">TCP</span>
<span class="ml" style="left:114.7px;top:221px">62</span>
<span class="ml" style="left:139.3px;top:221px">443 → 60320 [ACK] Seq=8703 Ack=2145 Win=65535 Len=0</span>
<div class="ml" style="left:0;top:238px;width:366px;background:#e7e6ff"></div>
<span class="ml" style="left:12.6px;top:238px">TLSv1.3</span>
<span class="ml" style="left:114.7px;top:238px">95</span>
<span class="ml" style="left:139.3px;top:238px">Application Data</span>
<div class="ml" style="left:0;top:255px;width:366px;background:#e7e6ff"></div>
<span class="ml" style="left:12.6px;top:255px">TCP</span>
<span class="ml" style="left:114.7px;top:255px">56</span>
<span class="ml" style="left:139.3px;top:255px">60320 → 443 [ACK] Seq=1434 Ack=8742 Win=64028 Len=0</span>
<div class="ml" style="left:0;top:272px;width:366px;background:#e4ffc7"></div>
<span class="ml" style="left:12.6px;top:272px">TCP</span>
<span class="ml" style="left:114.7px;top:272px">56</span>
<span class="ml" style="left:139.3px;top:272px">46878 → 80 [FIN, ACK] Seq=14553 Ack=68044 Win=65535 Len=0</span>
<div class="ml" style="left:0;top:289px;width:366px;background:#e4ffc7"></div>
<span class="ml" style="left:12.6px;top:289px">TCP</span>
<span class="ml" style="left:114.7px;top:289px">62</span>
<span class="ml" style="left:139.3px;top:289px">80 → 46878 [ACK] Seq=68044 Ack=14554 Win=65535 Len=0</span>
<div class="ml" style="left:0;top:306px;width:366px;background:#e4ffc7"></div>
<span class="ml" style="left:12.6px;top:306px">TCP</span>
<span class="ml" style="left:114.7px;top:306px">62</span>
<span class="ml" style="left:139.3px;top:306px">80 → 46878 [FIN, ACK] Seq=68044 Ack=14554 Win=65535 Len=0</span>
<div class="ml" style="left:0;top:323px;width:366px;background:#e4ffc7"></div>
<span class="ml" style="left:12.6px;top:323px">TCP</span>
<span class="ml" style="left:114.7px;top:323px">56</span>
<span class="ml" style="left:139.3px;top:323px">46878 → 80 [ACK] Seq=14554 Ack=68045 Win=65535 Len=0</span>
<div class="ml" style="left:0;top:340px;width:366px;background:#fce0ff"></div>
<span class="ml" style="left:12.6px;top:340px">ICMPv6</span>
<span class="ml" style="left:105.7px;top:340px">112</span>
<span class="ml" style="left:139.3px;top:340px">Router Advertisement from 52:56:00:00:00:02</span>
<div class="ml" style="left:0;top:357px;width:366px;background:#fce0ff"></div>
<span class="ml" style="left:12.6px;top:357px">ICMPv6</span>
<span class="ml" style="left:105.7px;top:357px">112</span>
<span class="ml" style="left:139.3px;top:357px">Multicast Listener Report Message v2</span>
<div class="ml" style="left:0;top:374px;width:366px;background:#fce0ff"></div>
<span class="ml" style="left:12.6px;top:374px">ICMPv6</span>
<span class="ml" style="left:105.7px;top:374px">112</span>
<span class="ml" style="left:139.3px;top:374px">Multicast Listener Report Message v2</span>
</div>
<div class="b" style="left:946px;top:125px;width:9px;height:432px;background:#1f2129;"></div>
<div class="b" style="left:947px;top:527px;width:6px;height:20px;background:#52545c;border-radius:3px;"></div>
<div class="b" style="left:600px;top:545px;width:346px;height:12px;background:#1f2129;"></div>
<div class="b" style="left:600px;top:549px;width:96px;height:6px;background:#4b4d55;border-radius:3px;"></div>
<div class="b" style="left:600px;top:557px;width:355px;height:2px;background:#1b1d24;"></div>
<div class="b" style="left:483px;top:559px;width:472px;height:428px;background:#272934;"></div>
<div class="b" style="left:483px;top:559px;width:54px;height:428px;background:#22252d;"></div>
<div class="w" style="left:483px;top:562px;width:471px;height:68px;color:#fbfbfb">
<div class="ml" style="left:0;top:0px;width:471.0px;background:#3080fa"></div>
<span class="ml" style="left:9px;top:0px">0000  00 04 00 01 00 06 08 00  27 d1 f8 5d 00 00 08 00</span>
<div class="ml" style="left:0;top:17px;width:471.0px;background:#3080fa"></div>
<span class="ml" style="left:9px;top:17px">0010  45 00 00 28 c9 a7 40 00  40 06 de 0b 0a 00 02 0f</span>
<div class="ml" style="left:0;top:34px;width:471.0px;background:#3080fa"></div>
<span class="ml" style="left:9px;top:34px">0020  68 14 1e fa b7 1e 00 50  aa 1b df eb 07 ae db cd</span>
<div class="ml" style="left:0;top:51px;width:270.3px;background:#3080fa"></div>
<span class="ml" style="left:9px;top:51px">0030  50 10 ff ff 93 37 00 00</span>
</div>
<div class="b" style="left:6px;top:559px;width:472px;height:428px;background:#272934;"></div>
<div class="b" style="left:6px;top:987px;width:472px;height:10px;background:#21242c;"></div>
<div class="b" style="left:7px;top:989px;width:257px;height:6px;background:#4f5159;border-radius:3px;"></div>
<div class="b" style="left:483px;top:987px;width:472px;height:10px;background:#21242c;"></div>
<div class="b" style="left:484px;top:989px;width:136px;height:6px;background:#4f5159;border-radius:3px;"></div>
<div class="b" style="left:478px;top:559px;width:5px;height:438px;background:#1f2129;"></div>
<div class="b" style="left:0px;top:997px;width:960px;height:28px;background:#20232b;"></div>
<div class="b" style="left:15px;top:1002px;width:13px;height:13px;border-radius:50%;background:radial-gradient(circle at 40% 35%,#dcdcdc,#b4b4b4)"></div>
<svg style="left:38px;top:1000px" width="14" height="15" viewBox="0 0 14 15"><rect x=".5" y="1.500" width="10.500" height="13" fill="#f0f0ee"/><path d="M1 2h10" stroke="#3a8fd9" stroke-width="2"/><path d="M3 11.500l1-3L11.500 1l2 2L6 10.500z" fill="#2b2f3a"/><path d="M2.500 12.500h6" stroke="#9a9a9a" stroke-width="1"/></svg>
<span class="t s" style="left:69.50px;top:1001.96px;font-size:15.4px;color:#f2f2f2;transform:scaleX(0.9536);-webkit-text-stroke:0.35px;">Frame (frame), 56 bytes</span>
<span class="t s" style="left:578.00px;top:1001.96px;font-size:15.4px;color:#f2f2f2;transform:scaleX(0.9222);-webkit-text-stroke:0.35px;">Packets: 3518</span>
<span class="t s" style="left:825.00px;top:1001.96px;font-size:15.4px;color:#f2f2f2;transform:scaleX(0.9901);-webkit-text-stroke:0.35px;">Profile: Default</span>
<div class="b" style="left:565px;top:1001px;width:1px;height:20px;background:transparent;border-left:1px dotted #6b6d75;"></div>
<div class="b" style="left:811px;top:1001px;width:1px;height:20px;background:transparent;border-left:1px dotted #6b6d75;"></div>
<svg style="left:939px;top:1009px" width="12" height="12" viewBox="0 0 12 12"><path d="M11 1v1M11 4v1M8 4v1M11 7v1M8 7v1M5 7v1M11 10v1M8 10v1M5 10v1M2 10v1" stroke="#6b6d75" stroke-width="1.500"/></svg>
</div>
<div class="w" id="dialog" style="left:414px;top:91px;width:1162px;height:891px;background:#23252e;border-radius:7px;box-shadow:0 0 0 1px rgba(10,11,15,.5),-3px 4px 13px 0 rgba(0,0,0,.5);overflow:visible">
<svg style="left:10px;top:8px" width="17" height="16" viewBox="0 0 17 16"><defs><linearGradient id="fin" x1="0" y1="0" x2="1" y2="1"><stop offset="0" stop-color="#3b8bff"/><stop offset="1" stop-color="#0b45c4"/></linearGradient></defs><path d="M.2 15.300C1.500 8 6.500 2 15.800 0c-1.600 5-1.500 10.300-.4 15.300z" fill="url(#fin)"/><path d="M.2 15.300h15.200l-.3-1.300H.6z" fill="#8db4f5"/></svg>
<span class="t s" style="left:479.00px;top:9.53px;font-size:12.6px;color:#fafafa;transform:scaleX(0.9441);-webkit-text-stroke:0.55px;">Wireshark · Packet 3482 · any</span>
<div class="b" style="left:1089px;top:7px;width:18px;height:18px;border-radius:50%;background:#363944;border:1px solid #0e0f14"></div>
<div class="b" style="left:1113px;top:7px;width:18px;height:18px;border-radius:50%;background:#363944;border:1px solid #0e0f14"></div>
<div class="b" style="left:1137px;top:7px;width:18px;height:18px;border-radius:50%;background:#a50faa;border:1px solid #a50faa"></div>
<svg style="left:1142px;top:12px" width="8" height="8" viewBox="0 0 8 8"><path d="M1 1l6 6M7 1L1 7" stroke="#0a0a0a" stroke-width="1.900" fill="none"/></svg>
<div class="b" style="left:16px;top:43px;width:1129px;height:340px;background:#272934;border:1px solid #1d1f27;"></div>
<div class="b" style="left:17px;top:44px;width:1119px;height:17px;background:#3080fa;"></div>
<div class="b" style="left:1136px;top:44px;width:8px;height:338px;background:#23252e;"></div>
<div class="b" style="left:1137.2px;top:86px;width:6px;height:254.5px;background:#4b4d55;border-radius:3px;"></div>
<div class="w" style="left:17px;top:44px;width:1119px;height:339px;color:#f4f4f4">
<span class="ml" style="left:23.5px;top:0px">Transmission Control Protocol, Src Port: 46878, Dst Port: 80, Seq: 14552, Ack: 68044, Len: 0</span>
<span class="ml" style="left:43.5px;top:17px">Source Port: 46878</span>
<span class="ml" style="left:43.5px;top:34px">Destination Port: 80</span>
<span class="ml" style="left:43.5px;top:51px">[Stream index: 12]</span>
<span class="ml" style="left:43.5px;top:68px">[Stream Packet Number: 55]</span>
<span class="ml" style="left:43.5px;top:85px">[Conversation completeness: Incomplete, DATA (15)]</span>
<span class="ml" style="left:43.5px;top:102px">[TCP Segment Len: 0]</span>
<span class="ml" style="left:43.5px;top:119px">Sequence Number: 14552    (relative sequence number)</span>
<span class="ml" style="left:43.5px;top:136px">Sequence Number (raw): 2853953515</span>
<span class="ml" style="left:43.5px;top:153px">[Next Sequence Number: 14552    (relative sequence number)]</span>
<span class="ml" style="left:43.5px;top:170px">Acknowledgment Number: 68044    (relative ack number)</span>
<span class="ml" style="left:43.5px;top:187px">Acknowledgment number (raw): 128900045</span>
<span class="ml" style="left:43.5px;top:204px">0101 .... = Header Length: 20 bytes (5)</span>
<span class="ml" style="left:43.5px;top:221px">Flags: 0x010 (ACK)</span>
<span class="ml" style="left:43.5px;top:238px">Window: 65535</span>
<span class="ml" style="left:43.5px;top:255px">[Calculated window size: 65535]</span>
<span class="ml" style="left:43.5px;top:272px">[Window size scaling factor: -2 (no window scaling used)]</span>
<span class="ml" style="left:43.5px;top:289px">Checksum: 0x9337 [unverified]</span>
<span class="ml" style="left:43.5px;top:306px">[Checksum Status: Unverified]</span>
<span class="ml" style="left:43.5px;top:323px">Urgent Pointer: 0</span>
</div>
<svg style="left:23.3px;top:50.6px" width="8" height="4" viewBox="0 0 8 4"><path d="M0 0h8L4 4z" fill="#b9d3ff"/></svg>
<svg style="left:44px;top:133px" width="5" height="9" viewBox="0 0 5 9"><path d="M0 0v9l5-4.500z" fill="#a2a4ab"/></svg>
<svg style="left:44px;top:269px" width="5" height="9" viewBox="0 0 5 9"><path d="M0 0v9l5-4.500z" fill="#a2a4ab"/></svg>
<div class="b" style="left:574px;top:384px;width:17px;height:2px;border-top:2px dotted #8a8c93"></div>
<div class="b" style="left:16px;top:387px;width:1129px;height:400px;background:#272934;border:1px solid #1d1f27;"></div>
<div class="b" style="left:17px;top:388px;width:53px;height:398px;background:#22252d;"></div>
<div class="w" style="left:17px;top:388px;width:1127px;height:70px;color:#f4f4f4">
<style>.hx i{font-style:normal;color:#8d8f96}.hx b{font-weight:400;background:#3080fa;color:#fff}.hx b i{color:#dfe9ff}</style>
<span class="ml" style="left:9.3px;top:0px;color:#7d7f86">0000</span>
<span class="ml hx" style="left:63.4px;top:0px">00 04 00 01 00 06 08 00  27 d1 f8 5d 00 00 08 00</span>
<span class="ml hx" style="left:522.4px;top:0px"><i>········</i> &#x27;<i>··</i>]<i>····</i></span>
<span class="ml" style="left:9.3px;top:17px;color:#7d7f86">0010</span>
<span class="ml hx" style="left:63.4px;top:17px">45 00 00 28 c9 a7 40 00  40 06 de 0b 0a 00 02 0f</span>
<span class="ml hx" style="left:522.4px;top:17px">E<i>··</i>(<i>··</i>@<i>·</i> @<i>·······</i></span>
<span class="ml" style="left:9.3px;top:34px;color:#c9c9cd">0020</span>
<span class="ml hx" style="left:63.4px;top:34px">68 14 1e fa b7 1e 00 50  aa 1b df eb <b>07 ae db cd</b></span>
<span class="ml hx" style="left:522.4px;top:34px">h<i>······</i>P <i>····</i><b><i>····</i></b></span>
<span class="ml" style="left:9.3px;top:51px;color:#7d7f86">0030</span>
<span class="ml hx" style="left:63.4px;top:51px">50 10 ff ff 93 37 00 00</span>
<span class="ml hx" style="left:522.4px;top:51px">P<i>····</i>7<i>··</i></span>
</div>
<span class="t s" style="left:16.00px;top:798.67px;font-size:12.2px;color:#ececec;font-style:italic;transform:scaleX(0.9522);-webkit-text-stroke:0.25px;">No.: 3482 · Time: 144.893052785 · Source: 10.0.2.15 · Destination: 104.20.30.250 · Protocol: TCP · Length: 56 · Info: [TCP Keep-Alive] 46878 → 80 [ACK] Seq=14552 Ack=68044 Win=65535 Len=0</span>
<div class="b" style="left:16px;top:826px;width:12px;height:12px;background:#1f2129;border:1px solid #2c2f38;border-radius:2px;"></div>
<svg style="left:17px;top:827px" width="9" height="9" viewBox="0 0 9 9"><path d="M1 5l2.200 2.800L8 .8" stroke="#e8e8e8" stroke-width="1.300" fill="none"/></svg>
<span class="t s" style="left:33.70px;top:823.96px;font-size:15.4px;color:#f4f4f4;transform:scaleX(0.9554);-webkit-text-stroke:0.35px;">Show packet bytes</span>
<span class="t s" style="left:190.00px;top:823.96px;font-size:15.4px;color:#f4f4f4;transform:scaleX(0.9502);-webkit-text-stroke:0.35px;">Layout:</span>
<div class="b" style="left:246px;top:819px;width:193px;height:24px;background:#1f2129;border:1px solid #3c3f49;border-radius:3px;"></div>
<span class="t s" style="left:249.00px;top:823.96px;font-size:15.4px;color:#f4f4f4;transform:scaleX(0.9487);-webkit-text-stroke:0.35px;">Vertical (Stacked)</span>
<svg style="left:424px;top:829px" width="8" height="4" viewBox="0 0 8 4"><path d="M0 0h8L4 4z" fill="#b9bac0"/></svg>
<div class="b" style="left:980px;top:850px;width:80px;height:26px;background:linear-gradient(#333b4b,#262b37);border:1.500px solid #4a78c8;border-radius:4px;"></div>
<svg style="left:994px;top:858px" width="9" height="9" viewBox="0 0 9 9"><path d="M1 1l7 7M8 1L1 8" stroke="#f2f2f2" stroke-width="1.800" fill="none"/></svg>
<span class="t s" style="left:1009.00px;top:856.16px;font-size:15.4px;color:#f4f4f4;transform:scaleX(0.9397);-webkit-text-stroke:0.35px;">Close</span>
<div class="b" style="left:1067px;top:851px;width:78px;height:24px;background:linear-gradient(#282b35,#23262f);border:1px solid #3c3f49;border-radius:4px;"></div>
<svg style="left:1081px;top:856px" width="14" height="14" viewBox="0 0 14 14"><circle cx="7" cy="7" r="5" fill="none" stroke="#f4f4f4" stroke-width="3"/><path d="M7 .5v3M7 10.500v3M.5 7h3M10.500 7h3" stroke="#e0383e" stroke-width="2.600" transform="rotate(45 7 7)"/></svg>
<span class="t s" style="left:1098.00px;top:856.16px;font-size:15.4px;color:#f4f4f4;transform:scaleX(0.9787);-webkit-text-stroke:0.35px;">Help</span>
</div>
<svg style="left:957px;top:55px" width="9" height="5" viewBox="0 0 9 5"><path d="M0 0h9L4.500 4.500z" fill="#8d8e94"/></svg>
</div></body></html>
